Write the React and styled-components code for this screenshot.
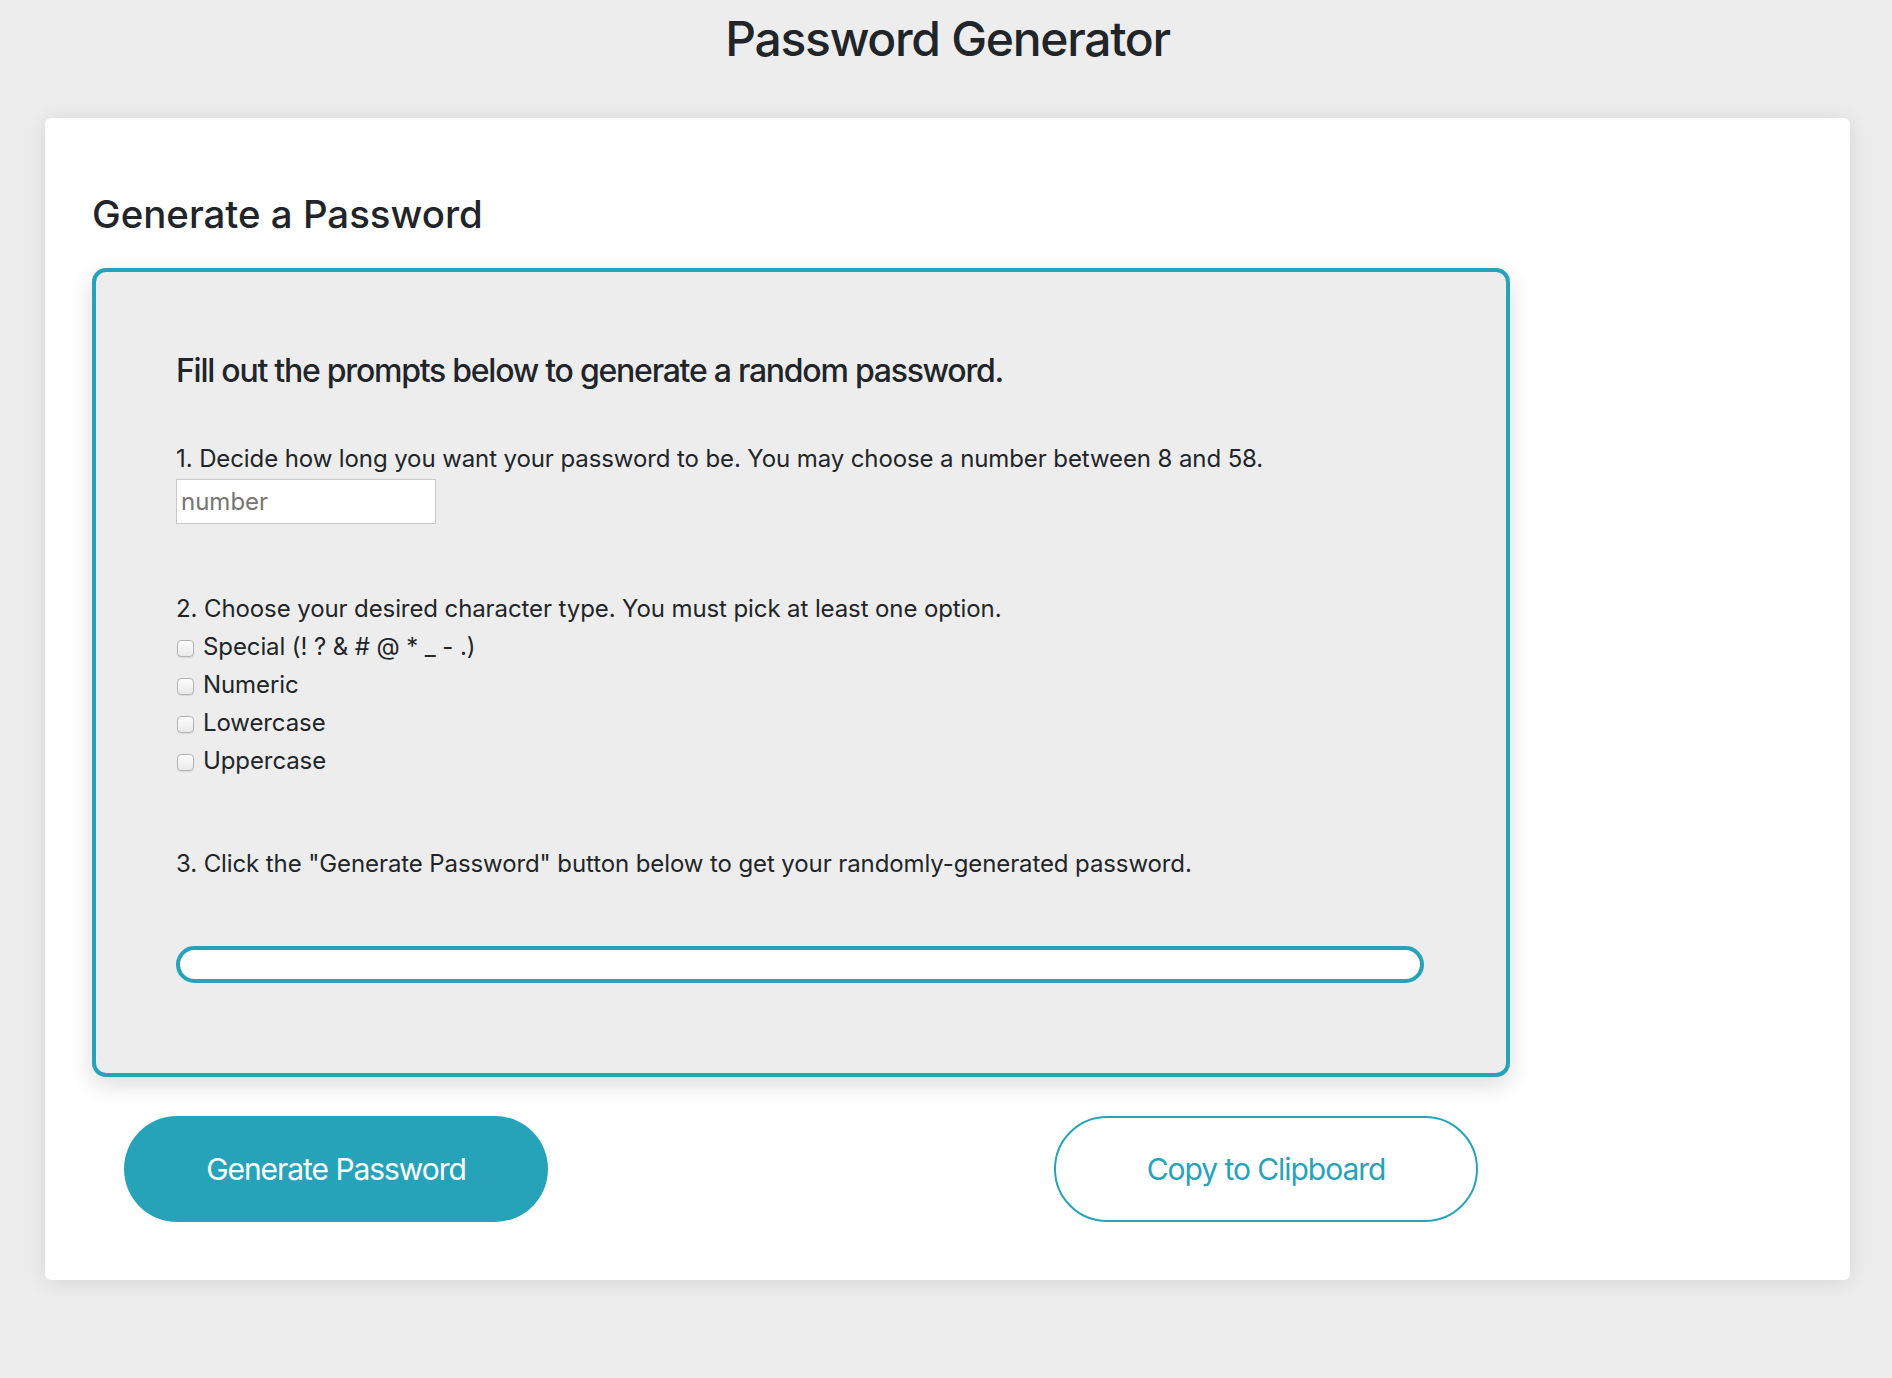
import styled, { createGlobalStyle } from "styled-components";
import { useState } from "react";

const teal = "#27a3b9";

const GlobalStyle = createGlobalStyle`
  body {
    margin: 0;
    background: #ededed;
    font-family: Inter, "Noto Sans", sans-serif;
    color: #212529;
  }
  * { box-sizing: border-box; }
`;

const Page = styled.div`
  padding: 0 42px 98px 45px;
`;

const Title = styled.h1`
  margin: 0 0 50px;
  padding-top: 10px;
  font-size: 48px;
  font-weight: 500;
  line-height: 1.2;
  letter-spacing: -1.3px;
  text-align: center;
`;

const Card = styled.section`
  background: #fff;
  border-radius: 6px;
  box-shadow: 0 2px 22px rgba(0, 0, 0, 0.1);
  padding: 73px 47px 58px 47px;
`;

const CardHeading = styled.h2`
  margin: 0 0 31px;
  font-size: 38.4px;
  font-weight: 500;
  line-height: 1.2;
`;

const PromptBox = styled.div`
  width: 1418px;
  background: #ededed;
  border: 4px solid ${teal};
  border-radius: 14px;
  box-shadow: 0 8px 24px rgba(0, 0, 0, 0.14);
  padding: 80px 82px 90px 80px;
`;

const Lead = styled.h3`
  margin: 0;
  font-size: 32px;
  font-weight: 500;
  line-height: 1.2;
  letter-spacing: -1.25px;
`;

const Step = styled.p`
  margin: ${(p) => p.$top}px 0 0;
  font-size: 24px;
  line-height: 36px;
  letter-spacing: -0.1px;
`;

const NumberInput = styled.input`
  display: block;
  margin-top: 2px;
  width: 260px;
  height: 45px;
  border: 1px solid #c9c9c9;
  background: #fff;
  padding: 0 4px;
  font-family: inherit;
  font-size: 24px;
  color: #212529;
  outline: none;
  &::placeholder {
    color: #757575;
  }
`;

const OptionGroup = styled.div`
  margin-top: 66px;
  font-size: 24px;
  line-height: 38px;
  letter-spacing: -0.1px;
`;

const OptionRow = styled.label`
  display: flex;
  align-items: center;
  height: 38px;
  gap: 9px;
`;

const Check = styled.input.attrs({ type: "checkbox" })`
  appearance: none;
  margin: 2px 0 0 1px;
  width: 17px;
  height: 17px;
  border: 1px solid #b3b3b3;
  border-radius: 4px;
  background: linear-gradient(#fdfdfd, #e9e9e9);
  box-shadow: 0 1px 1px rgba(0, 0, 0, 0.08);
  &:checked {
    background: ${teal};
    border-color: ${teal};
  }
`;

const Output = styled.textarea`
  display: block;
  margin-top: 64px;
  width: 100%;
  height: 37px;
  border: 4px solid ${teal};
  border-radius: 20px;
  background: #fff;
  resize: none;
  padding: 2px 14px;
  font-family: inherit;
  font-size: 20px;
  outline: none;
  overflow: hidden;
`;

const ButtonRow = styled.div`
  display: flex;
  justify-content: space-between;
  width: 1418px;
  padding: 0 32px;
  margin-top: 39px;
`;

const Button = styled.button`
  width: 424px;
  height: 106px;
  border-radius: 53px;
  font-family: inherit;
  font-size: 30px;
  font-weight: 400;
  letter-spacing: -1.05px;
  cursor: pointer;
  background: ${(p) => (p.$outline ? "#fff" : teal)};
  color: ${(p) => (p.$outline ? teal : "#fff")};
  border: ${(p) => (p.$outline ? `2px solid ${teal}` : "none")};
`;

const options = ["Special (! ? & # @ * _ - .)", "Numeric", "Lowercase", "Uppercase"];

export default function App() {
  const [password, setPassword] = useState("");

  return (
    <Page>
      <GlobalStyle />
      <Title>Password Generator</Title>
      <Card>
        <CardHeading>Generate a Password</CardHeading>
        <PromptBox>
          <Lead>Fill out the prompts below to generate a random password.</Lead>
          <Step $top={51}>
            1. Decide how long you want your password to be. You may choose a number between 8 and 58.
          </Step>
          <NumberInput type="text" placeholder="number" />
          <OptionGroup>
            <div>2. Choose your desired character type. You must pick at least one option.</div>
            {options.map((o) => (
              <OptionRow key={o}>
                <Check />
                <span>{o}</span>
              </OptionRow>
            ))}
          </OptionGroup>
          <Step $top={66}>
            3. Click the "Generate Password" button below to get your randomly-generated password.
          </Step>
          <Output readOnly value={password} />
        </PromptBox>
        <ButtonRow>
          <Button onClick={() => setPassword("")}>Generate Password</Button>
          <Button $outline>Copy to Clipboard</Button>
        </ButtonRow>
      </Card>
    </Page>
  );
}
